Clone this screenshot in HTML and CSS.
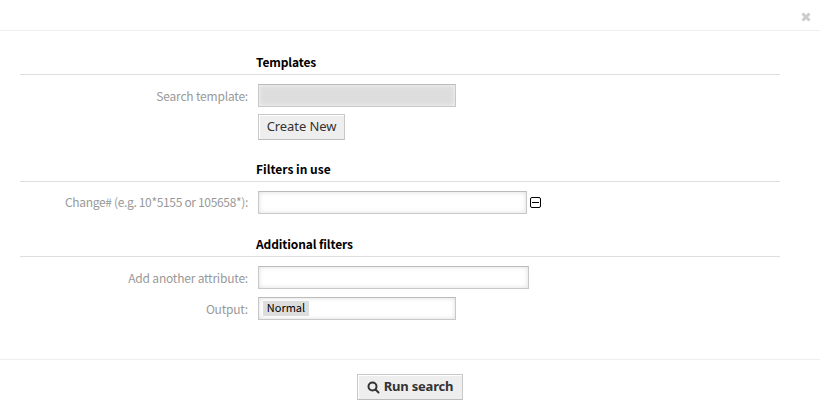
FILE: index.html
```
<!DOCTYPE html>
<html lang="en">
<head>
<meta charset="utf-8">
<title>Search</title>
<link rel="stylesheet" href="styles.css">
</head>
<body>
<div class="dialog">
  <header class="header">
    <svg class="close" width="10" height="10" viewBox="0 0 10 10"><path d="M1.5 1.5 8.5 8.5M8.5 1.5 1.5 8.5"/></svg>
  </header>
  <main class="content">
    <section class="group templates">
      <h2>Templates</h2>
      <div class="row"><label>Search template:</label><div class="field disabled"></div></div>
      <div class="row action"><button class="button create">Create New</button></div>
    </section>
    <section class="group filters">
      <h2>Filters in use</h2>
      <div class="row"><label>Change# (e.g. 10*5155 or 105658*):</label><div class="field change"></div>
        <svg class="remove" width="11" height="11" viewBox="0 0 11 11"><rect x=".5" y=".5" width="10" height="10" rx="1.5"/><path d="M2 5.5H9"/></svg>
      </div>
    </section>
    <section class="group additional">
      <h2>Additional filters</h2>
      <div class="row"><label>Add another attribute:</label><div class="field attribute"></div></div>
      <div class="row output"><label>Output:</label><div class="field"><span class="tag">Normal</span></div></div>
    </section>
  </main>
  <footer class="footer">
    <button class="button run"><svg width="13" height="13" viewBox="0 0 13 13"><circle cx="5.5" cy="5.5" r="4"/><path d="M8.5 8.5 11.5 11.5"/></svg><span>Run search</span></button>
  </footer>
</div>
</body>
</html>
```
FILE: styles.css
```
* { box-sizing: border-box; }
body { margin: 0; background: #fff; font: 12px/16px "Noto Sans CJK SC", sans-serif; color: #000; }
.dialog { height: 413px; display: flex; flex-direction: column; overflow: hidden; }
.header { height: 31px; flex: none; border-bottom: 1px solid #eee; display: flex; justify-content: flex-end; padding: 12px 9px 0 0; }
.close { fill: none; stroke: #ccc; stroke-width: 3; }
.content { height: 328px; flex: none; padding: 22px 40px 0 20px; }
.group { height: 107px; }
.filters { height: 75px; }
h2 { margin: 0; height: 22px; padding-left: 236px; border-bottom: 1px solid #ddd; font-size: 12px; line-height: 18px; font-weight: 700; letter-spacing: -.12px; }
.filters h2 { letter-spacing: 0; }
.row { display: flex; height: 23px; margin-top: 9px; }
.row label { width: 228px; margin-right: 10px; text-align: right; line-height: 23px; color: #999; white-space: nowrap; letter-spacing: -.2px; }
.filters label { line-height: 21px; letter-spacing: -.33px; }
.row.action { margin-top: 7px; padding-left: 238px; }
.row.output { margin-top: 8px; }
.field { width: 198px; height: 23px; border: 1px solid #c8c8c8; border-top-color: #bbb; background: #fff; box-shadow: inset 0 0 5px #ddd; padding: 3px 4px; }
.disabled { background: #ddd; box-shadow: inset 0 0 5px #f5f5f5; }
.change { width: 269px; }
.attribute { width: 271px; }
.remove { margin: 6px 0 0 3px; fill: none; stroke: #000; }
.tag { display: block; width: 46px; height: 15px; background: #ddd; font-size: 11px; line-height: 13px; text-align: center; }
.button { height: 26px; flex: none; padding: 0; border: 1px solid #c8c8c8; border-bottom-color: #bbb; background: #eee; box-shadow: inset 1px 1px 0 #fff; color: #333; font: 13px/22px "Noto Sans", sans-serif; white-space: nowrap; }
.create { width: 87px; padding-bottom: 2px; letter-spacing: -.1px; }
.footer { flex: 1; border-top: 1px solid #eee; display: flex; justify-content: center; padding-top: 14px; }
.run { width: 106px; display: flex; align-items: center; justify-content: center; gap: 4px; font-weight: 700; letter-spacing: -.2px; }
.run span { padding-bottom: 2px; }
.run svg { margin-top: 1px; fill: none; stroke: #333; stroke-width: 2; stroke-linecap: round; }
```
